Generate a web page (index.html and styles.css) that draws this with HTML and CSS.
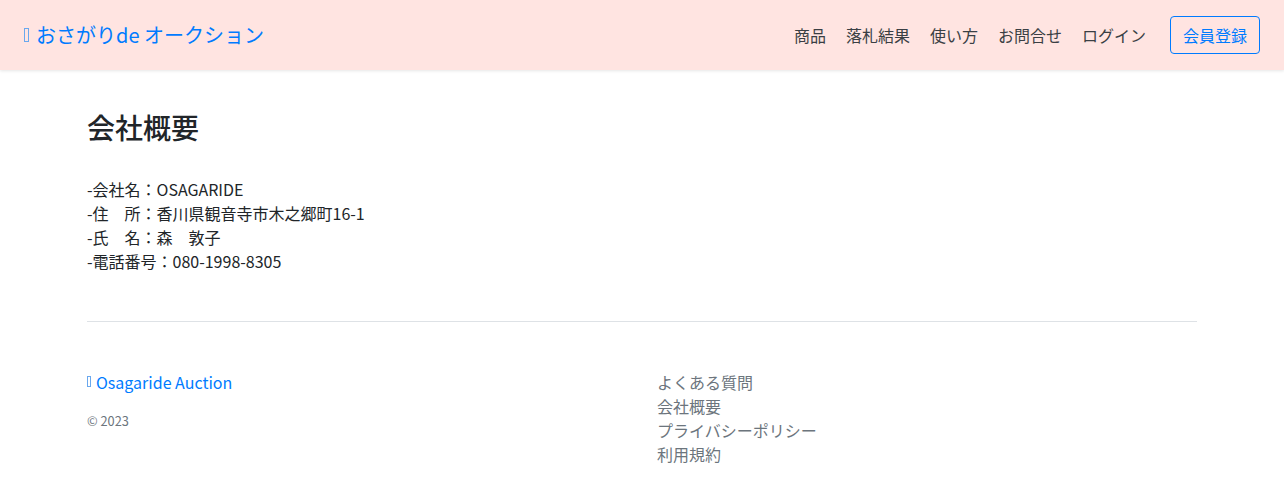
FILE: index.html
```html
<!DOCTYPE html>
<html lang="ja">
    <head>
        <meta charset="utf-8">
        <title>会社概要 | おさがりde オークション</title>
        <link rel="stylesheet" href="styles.css">
    </head>
    <body>
        <nav class="navbar">
            <a class="brand" href="#"><span class="tofu"></span>おさがりde オークション</a>
            <ul class="nav-links">
                <li><a href="#">商品</a></li>
                <li><a href="#">落札結果</a></li>
                <li><a href="#">使い方</a></li>
                <li><a href="#">お問合せ</a></li>
                <li><a href="#">ログイン</a></li>
            </ul>
            <a class="btn-outline" href="#">会員登録</a>
        </nav>

        <main class="container">
            <h2 class="page-title">会社概要</h2>
            <p class="company-info">
                -会社名：OSAGARIDE<br>
                -住　所：香川県観音寺市木之郷町16-1<br>
                -氏　名：森　敦子<br>
                -電話番号：080-1998-8305
            </p>
        </main>

        <footer class="container footer">
            <div class="footer-row">
                <div class="footer-col">
                    <a class="footer-brand" href="#"><span class="tofu tofu-small"></span>Osagaride Auction</a>
                    <small class="copy">© 2023</small>
                </div>
                <div class="footer-col">
                    <ul class="footer-links">
                        <li><a href="#">よくある質問</a></li>
                        <li><a href="#">会社概要</a></li>
                        <li><a href="#">プライバシーポリシー</a></li>
                        <li><a href="#">利用規約</a></li>
                    </ul>
                </div>
            </div>
        </footer>
    </body>
</html>
```

FILE: styles.css
```css
* {
    box-sizing: border-box;
}

body {
    margin: 0;
    font-family: "Noto Sans CJK JP", "Noto Sans", sans-serif;
    font-size: 16px;
    line-height: 1.5;
    color: #212529;
    background: #fff;
}

a {
    text-decoration: none;
}

ul {
    list-style: none;
    margin: 0;
    padding: 0;
}

.navbar {
    display: flex;
    align-items: center;
    height: 70px;
    padding: 0 24px;
    background: #ffe4e1;
    box-shadow: 0 1px 3px rgba(0, 0, 0, 0.1);
}

.brand {
    display: flex;
    align-items: center;
    font-size: 20px;
    color: #007bff;
}

.tofu {
    display: inline-block;
    width: 5px;
    height: 14px;
    margin-right: 7px;
    border: 1px solid #6aa8ee;
}

.tofu-small {
    width: 4px;
    height: 11px;
    margin-right: 5px;
}

.nav-links {
    display: flex;
    margin-left: auto;
}

.nav-links a {
    display: block;
    padding: 8px 10px;
    color: #3a3f44;
}

.btn-outline {
    margin-left: 14px;
    padding: 6px 12px;
    border: 1px solid #007bff;
    border-radius: 4px;
    color: #007bff;
}

.container {
    width: 1110px;
    margin: 0 auto;
}

.page-title {
    margin: 41px 0 32px;
    font-size: 28px;
    font-weight: 500;
    line-height: 1.2;
}

.company-info {
    margin: 0;
}

.footer {
    margin-top: 48px;
    padding-top: 48px;
    border-top: 1px solid #dee2e6;
}

.footer-row {
    display: flex;
}

.footer-col {
    flex: 0 0 570px;
}

.footer-brand {
    display: flex;
    align-items: center;
    color: #007bff;
}

.copy {
    display: block;
    margin-top: 17px;
    font-size: 12.8px;
    color: #6c757d;
}

.footer-links a {
    color: #6c757d;
}
```
